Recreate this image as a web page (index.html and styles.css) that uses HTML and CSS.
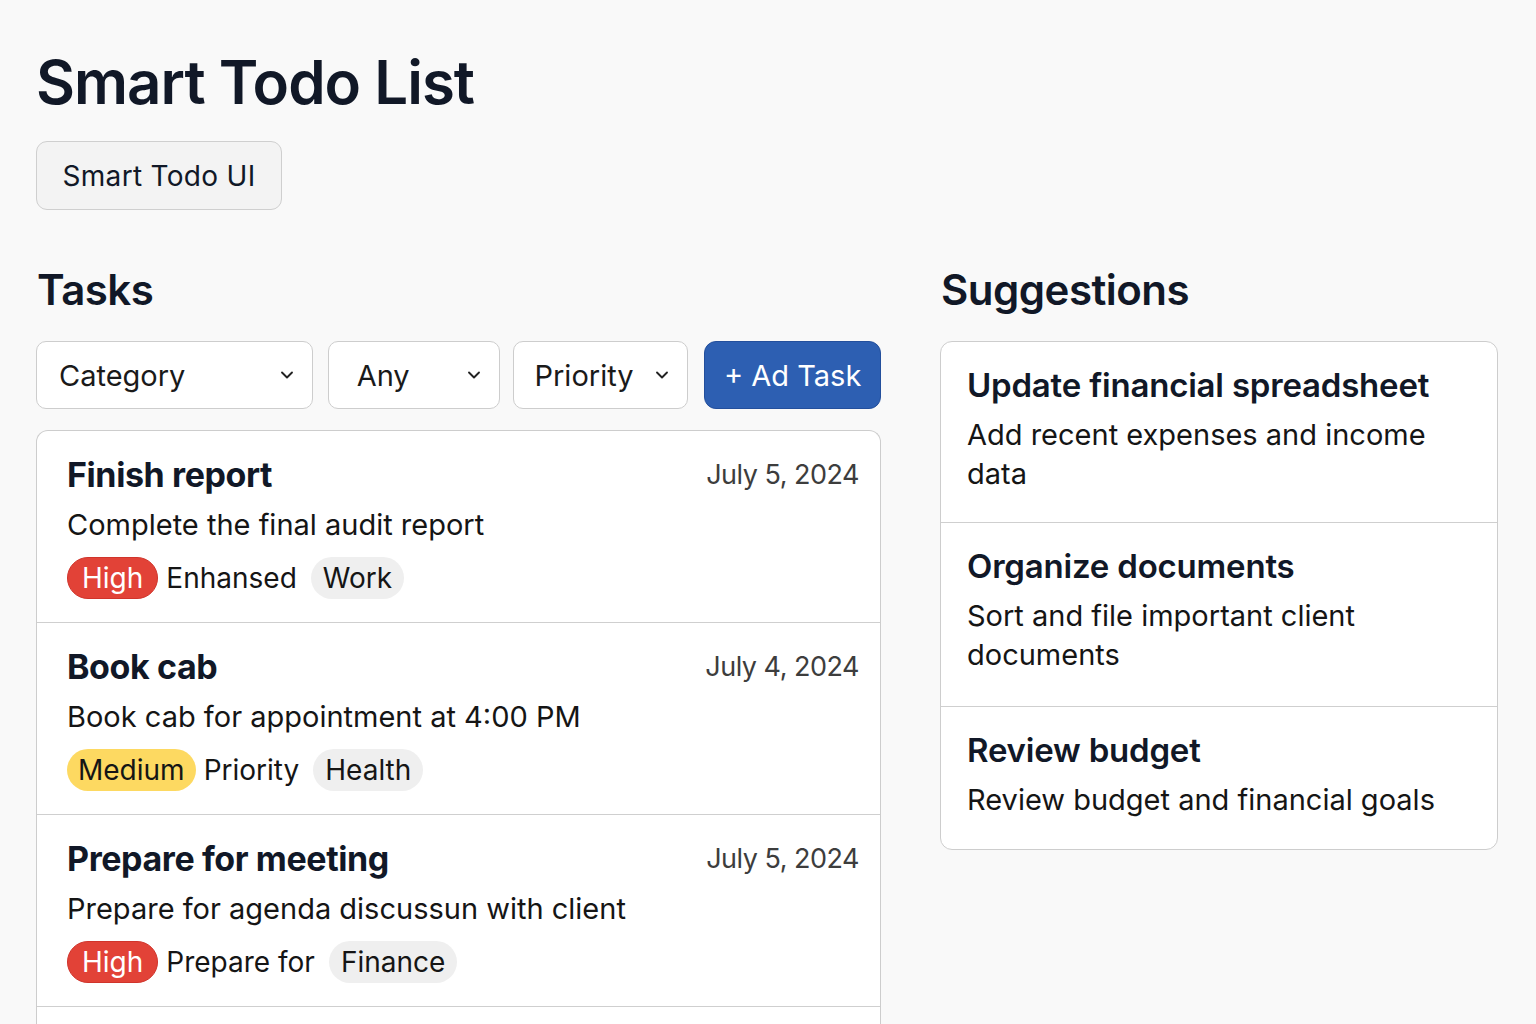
FILE: index.html
```html
<!DOCTYPE html>
<html lang="en">
<head>
<meta charset="utf-8">
<title>Smart Todo List</title>
<link rel="stylesheet" href="styles.css">
</head>
<body>
<div class="page">
  <header class="header">
    <h1 class="title">Smart Todo List</h1>
    <button class="ui-btn">Smart Todo UI</button>
  </header>
  <main class="columns">
    <section class="tasks">
      <h2 class="section-title">Tasks</h2>
      <div class="filters">
        <div class="select sel-category"><span>Category</span><svg class="chev" viewBox="0 0 16 16"><path d="M4 6l4 4 4-4"/></svg></div>
        <div class="select sel-any"><span>Any</span><svg class="chev" viewBox="0 0 16 16"><path d="M4 6l4 4 4-4"/></svg></div>
        <div class="select sel-priority"><span>Priority</span><svg class="chev" viewBox="0 0 16 16"><path d="M4 6l4 4 4-4"/></svg></div>
        <button class="add-btn">+ Ad Task</button>
      </div>
      <div class="task-list">
        <div class="task">
          <div class="task-head">
            <h3 class="task-title">Finish report</h3>
            <span class="task-date">July 5, 2024</span>
          </div>
          <p class="task-desc">Complete the final audit report</p>
          <div class="tags">
            <span class="pill pill-high">High</span>
            <span class="tag-text">Enhansed</span>
            <span class="pill pill-cat">Work</span>
          </div>
        </div>
        <div class="task">
          <div class="task-head">
            <h3 class="task-title">Book cab</h3>
            <span class="task-date">July 4, 2024</span>
          </div>
          <p class="task-desc">Book cab for appointment at 4:00 PM</p>
          <div class="tags">
            <span class="pill pill-medium">Medium</span>
            <span class="tag-text">Priority</span>
            <span class="pill pill-cat">Health</span>
          </div>
        </div>
        <div class="task">
          <div class="task-head">
            <h3 class="task-title">Prepare for meeting</h3>
            <span class="task-date">July 5, 2024</span>
          </div>
          <p class="task-desc">Prepare for agenda discussun with client</p>
          <div class="tags">
            <span class="pill pill-high">High</span>
            <span class="tag-text">Prepare for</span>
            <span class="pill pill-cat">Finance</span>
          </div>
        </div>
        <div class="task task-empty"></div>
      </div>
    </section>
    <aside class="suggestions">
      <h2 class="section-title">Suggestions</h2>
      <div class="sugg-list">
        <div class="sugg">
          <h3 class="sugg-title">Update financial spreadsheet</h3>
          <p class="sugg-desc">Add recent expenses and income data</p>
        </div>
        <div class="sugg sugg-mid">
          <h3 class="sugg-title">Organize documents</h3>
          <p class="sugg-desc">Sort and file important client documents</p>
        </div>
        <div class="sugg sugg-last">
          <h3 class="sugg-title">Review budget</h3>
          <p class="sugg-desc">Review budget and financial goals</p>
        </div>
      </div>
    </aside>
  </main>
</div>
</body>
</html>
```
FILE: styles.css
```css
* { box-sizing: border-box; }
html, body { margin: 0; padding: 0; }
body {
  background: #f9f9f9;
  font-family: Inter, "Noto Sans", "Liberation Sans", sans-serif;
  color: #111827;
  overflow: hidden;
  height: 1024px;
}
.page {
  padding: 44px 38px 0 36px;
}
.header {
  display: flex;
  flex-direction: column;
  align-items: flex-start;
}
.title {
  margin: 0;
  font-size: 60px;
  font-weight: 600;
  letter-spacing: -1px;
  line-height: 76px;
}
.ui-btn {
  margin-top: 21px;
  height: 69px;
  width: 246px;
  border: 1.5px solid #cfcfcf;
  border-radius: 11px;
  background: #f3f3f3;
  font-family: inherit;
  font-size: 28px;
  color: #111827;
  letter-spacing: 0.3px;
  padding: 0;
}
.columns {
  display: grid;
  grid-template-columns: 845px 558px;
  column-gap: 59px;
  margin-top: 56px;
}
.section-title {
  margin: 0;
  font-size: 42px;
  font-weight: 600;
  line-height: 48px;
  letter-spacing: -0.5px;
  padding-left: 1px;
}
.filters {
  display: flex;
  margin-top: 27px;
  height: 68px;
}
.select {
  display: flex;
  align-items: center;
  justify-content: space-between;
  height: 68px;
  background: #fff;
  border: 1.5px solid #cdcdcd;
  border-radius: 10px;
  font-size: 29px;
  color: #1a1a1a;
  padding: 0 15px 0 22px;
}
.sel-category { width: 277px; }
.sel-any { width: 173px; margin-left: 15px; padding-left: 28px; }
.sel-priority { width: 175px; margin-left: 13px; padding-left: 20px; }
.chev {
  width: 20px;
  height: 20px;
  fill: none;
  stroke: #222;
  stroke-width: 1.5;
  stroke-linecap: round;
  stroke-linejoin: round;
}
.add-btn {
  margin-left: 16px;
  width: 177px;
  height: 68px;
  border: 1.5px solid #234f9c;
  border-radius: 12px;
  background: #2d5fb2;
  color: #fff;
  font-family: inherit;
  font-size: 29px;
  padding: 0;
}
.task-list {
  margin-top: 21px;
  background: #fff;
  border: 1.5px solid #cdcdcd;
  border-bottom: none;
  border-radius: 12px 12px 0 0;
}
.task {
  padding: 24px 21px 24px 30px;
  border-bottom: 1.5px solid #cfcfcf;
  height: 192px;
}
.task-empty { height: 60px; border-bottom: none; }
.task-head {
  display: flex;
  justify-content: space-between;
  align-items: flex-start;
}
.task-title {
  margin: 0;
  font-size: 34px;
  font-weight: 700;
  line-height: 40px;
  letter-spacing: -0.4px;
}
.task-date {
  font-size: 27px;
  color: #3d3d3d;
  line-height: 40px;
  letter-spacing: -0.5px;
}
.task-desc {
  margin: 11px 0 0 0;
  font-size: 29px;
  line-height: 38px;
  color: #151515;
}
.tags {
  display: flex;
  align-items: center;
  margin-top: 13px;
  font-size: 28px;
  line-height: 34px;
}
.pill {
  display: inline-flex;
  align-items: center;
  height: 42px;
  border-radius: 21px;
  padding: 0 12px;
}
.pill-high { background: #e24237; color: #fff; padding: 0 14px; border: 1px solid #d0342b; }
.pill-medium { background: #fdd961; color: #151515; padding: 0 11px; }
.pill-cat { background: #efefef; color: #151515; margin-left: 14px; }
.tag-text { margin-left: 8px; color: #151515; }
.sugg-list {
  margin-top: 27px;
  background: #fff;
  border: 1.5px solid #cdcdcd;
  border-radius: 12px;
}
.sugg {
  padding: 22px 20px 26px 26px;
  border-bottom: 1.5px solid #cfcfcf;
  height: 181px;
}
.sugg-mid { height: 184px; }
.sugg-last { border-bottom: none; height: 142px; }
.sugg-title {
  margin: 0;
  font-size: 33px;
  font-weight: 600;
  line-height: 42px;
  letter-spacing: -0.2px;
}
.sugg-desc {
  margin: 9px 0 0 0;
  font-size: 29px;
  line-height: 39px;
  color: #151515;
}
```
